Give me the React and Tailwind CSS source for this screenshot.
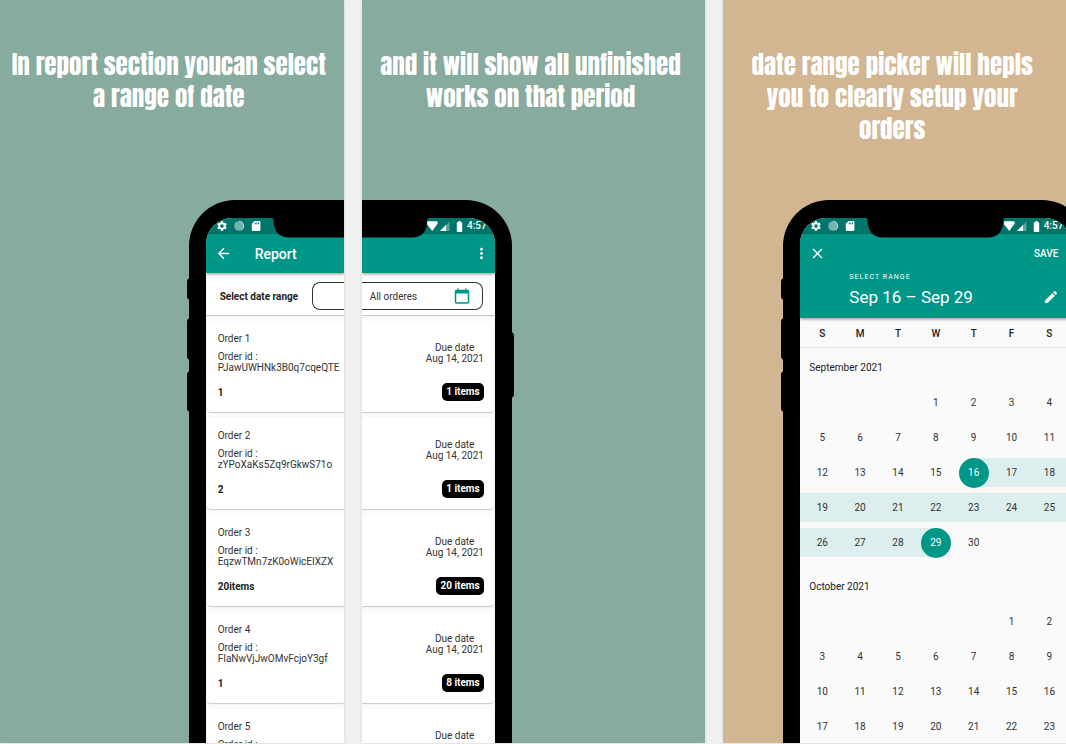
import React from "react";
import { MdSettings, MdBatteryFull, MdArrowBack, MdMoreVert, MdClose, MdEdit } from "react-icons/md";

const orders = [
  { name: "Order 1", id: "PJawUWHNk3B0q7cqeQTE", count: "1", items: "1 items" },
  { name: "Order 2", id: "zYPoXaKs5Zq9rGkwS71o", count: "2", items: "1 items" },
  { name: "Order 3", id: "EqzwTMn7zK0oWicEIXZX", count: "20items", items: "20 items" },
  { name: "Order 4", id: "FIaNwVjJwOMvFcjoY3gf", count: "1", items: "8 items" },
  { name: "Order 5", id: "", count: "", items: "" },
];

function Slide({ color, lines, children }) {
  return (
    <section className={`flex min-w-0 flex-col overflow-hidden shadow-[0_0_3px_rgba(0,0,0,0.12)] ${color}`}>
      <h2 className="h-[200px] shrink-0 pt-[49px] pr-1.5 text-center font-['Anton','Liberation_Sans_Narrow',sans-serif] text-[25px] leading-8 font-normal text-white">
        {lines.map((line) => (
          <span key={line} className="block whitespace-nowrap">
            {line}
          </span>
        ))}
      </h2>
      {children}
    </section>
  );
}

function LeftKeys() {
  return (
    <>
      <i className="absolute top-[78px] -left-0.5 h-[22px] w-1 rounded-l-sm bg-black" />
      <i className="absolute top-[118px] -left-0.5 h-[42px] w-1 rounded-l-sm bg-black" />
      <i className="absolute top-[171px] -left-0.5 h-[41px] w-1 rounded-l-sm bg-black" />
    </>
  );
}

function StatusLeft() {
  return (
    <div className="flex items-center gap-[5px] pl-2.5 text-white">
      <MdSettings size={12} />
      <svg width="12" height="12" viewBox="0 0 12 12">
        <circle cx="6" cy="6" r="4.8" fill="#fff" fillOpacity="0.45" />
        <path d="M6 1.2A4.8 4.8 0 0 1 8.5 10.1" fill="none" stroke="#fff" strokeOpacity="0.6" />
      </svg>
      <svg width="12" height="12" viewBox="0 0 12 12" fill="#fff">
        <path
          fillRule="evenodd"
          d="M4.6 1H9.4Q10.4 1 10.4 2V10Q10.4 11 9.4 11H2.8Q1.8 11 1.8 10V3.8ZM4.7 2.6V4.2H5.7V2.6ZM6.4 2.6V4.2H7.4V2.6ZM8.1 2.6V4.2H9.1V2.6Z"
        />
      </svg>
    </div>
  );
}

function StatusRight() {
  return (
    <div className="relative z-30 ml-auto flex items-center pr-2 text-white">
      <svg width="12" height="12" viewBox="0 0 12 12" fill="#fff">
        <path d="M6.300 11L1.200 4.500Q.9 3 1.200 1.300H11.200Q12 2.300 11.600 3.800Z" />
      </svg>
      <svg width="12" height="12" viewBox="0 0 12 12" fill="#fff" className="ml-px">
        <path d="M1 11L10.500 1.500V11Z" fillOpacity="0.35" />
        <path d="M1 11L7 5V11Z" />
      </svg>
      <MdBatteryFull size={13} className="ml-0.5" />
      <span className="ml-px text-[10px] leading-4 font-medium">4:57</span>
    </div>
  );
}

function OrdersLeft() {
  return (
    <div className="relative ml-auto flex w-[155px] flex-1 flex-col rounded-tl-[46px] bg-black pt-[18px] pl-[17px]">
      <LeftKeys />
      <div className="relative flex flex-1 flex-col overflow-hidden rounded-tl-[26px] bg-[#fafafa]">
        <div className="flex h-4 shrink-0 items-center bg-[#00756a]">
          <StatusLeft />
        </div>
        <svg className="absolute top-0 right-0 z-20" width="72" height="20" viewBox="0 0 72 20">
          <path d="M0 0C1.500 0 1.500 1 1.500 3C2 13 7 19.500 17 19.500H72V0Z" />
        </svg>
        <header className="z-10 flex h-[39px] shrink-0 items-center gap-[23px] bg-[#009688] pl-[9px] text-white shadow-[0_1px_3px_rgba(0,0,0,0.45)]">
          <button aria-label="Back">
            <MdArrowBack size={17} />
          </button>
          <h3 className="text-sm font-medium">Report</h3>
        </header>
        <div className="flex h-[42px] shrink-0 items-center bg-white pt-1 pl-3.5 shadow-[0_1px_1px_rgba(0,0,0,0.2)]">
          <span className="flex-1 text-[10px] font-bold whitespace-nowrap text-[#212121]">Select date range</span>
          <div className="h-7 w-8 rounded-l-lg border border-r-0 border-[#333]" />
        </div>
        <ul className="mt-1.5 flex flex-col gap-1.5 text-[10px] leading-[11px] text-[#333]">
          {orders.map((o) => (
            <li
              key={o.name}
              className="ml-px h-[91px] rounded-l-sm bg-white pt-3 pl-[11px] shadow-[0_1px_1px_rgba(0,0,0,0.2)]"
            >
              <p>{o.name}</p>
              <p className="mt-[7px]">Order id :</p>
              <p className="whitespace-nowrap">{o.id}</p>
              <p className="mt-3.5 font-bold text-[#212121]">{o.count}</p>
            </li>
          ))}
        </ul>
      </div>
    </div>
  );
}

function OrdersRight() {
  return (
    <div className="relative flex w-[150px] flex-1 flex-col rounded-tr-[46px] bg-black pt-[18px] pr-[17px]">
      <i className="absolute top-[132px] -right-0.5 h-[66px] w-1 rounded-r-sm bg-black" />
      <div className="relative flex flex-1 flex-col overflow-hidden rounded-tr-[26px] bg-[#fafafa]">
        <div className="flex h-4 shrink-0 items-center bg-[#00756a]">
          <StatusRight />
        </div>
        <svg className="absolute top-0 left-0 z-20" width="67" height="20" viewBox="0 0 67 20">
          <path d="M67 0C65.500 0 65.500 1 65.500 3C65 13 60 19.500 50 19.500H0V0Z" />
        </svg>
        <header className="z-10 flex h-[39px] shrink-0 items-center justify-end bg-[#009688] pr-[5px] text-white shadow-[0_1px_3px_rgba(0,0,0,0.45)]">
          <button aria-label="More options">
            <MdMoreVert size={17} />
          </button>
        </header>
        <div className="flex h-[42px] shrink-0 items-center bg-white pt-1 pr-3 shadow-[0_1px_1px_rgba(0,0,0,0.2)]">
          <button className="flex h-7 flex-1 items-center justify-between rounded-r-lg border border-l-0 border-[#333] pr-3 pl-2 text-[10px] text-[#333]">
            All orderes
            <svg width="16" height="16" viewBox="0 0 16 16" fill="none" stroke="#009688">
              <rect x="1.500" y="2.500" width="13" height="12.500" rx="1" strokeWidth="1.500" />
              <path d="M1 4H15" strokeWidth="3" />
              <path d="M4 .5V3M12 .5V3" strokeWidth="1.500" />
            </svg>
          </button>
        </div>
        <ul className="mt-1.5 flex flex-col gap-1.5 text-[10px] leading-[11px] text-[#333]">
          {orders.map((o) => (
            <li
              key={o.name}
              className="mr-px flex h-[91px] flex-col items-end rounded-r-sm bg-white pt-[21px] pr-2.5 shadow-[0_1px_1px_rgba(0,0,0,0.2)]"
            >
              <p className="w-[58px] text-center whitespace-nowrap">
                Due date
                <br />
                {o.items && "Aug 14, 2021"}
              </p>
              {o.items && (
                <span className="mt-[19px] rounded-[5px] bg-black px-1 py-1 leading-[10px] font-bold text-white">
                  {o.items}
                </span>
              )}
            </li>
          ))}
        </ul>
      </div>
    </div>
  );
}

const start = 16;
const end = 29;

function Day({ day, ranged }) {
  const isStart = ranged && day === start;
  const isEnd = ranged && day === end;
  const inside = ranged && day > start && day < end;
  return (
    <div className="flex h-[35px] items-center">
      <div
        className={`flex h-[29px] flex-1 items-center justify-center ${inside ? "bg-[#dceeed]" : ""} ${
          isStart ? "bg-linear-to-r from-transparent from-50% to-[#dceeed] to-50%" : ""
        } ${isEnd ? "bg-linear-to-l from-transparent from-50% to-[#dceeed] to-50%" : ""}`}
      >
        <button
          className={`size-[30px] shrink-0 rounded-full text-[10px] ${
            isStart || isEnd ? "bg-[#009688] text-white" : "text-[#333]"
          }`}
        >
          {day}
        </button>
      </div>
    </div>
  );
}

function Edge({ filled }) {
  return (
    <div className="flex h-[35px] items-center">
      <div className={`h-[29px] flex-1 ${filled ? "bg-[#dceeed]" : ""}`} />
    </div>
  );
}

function Month({ title, offset, last, ranged }) {
  const weeks = [];
  for (let first = 1 - offset; first <= last; first += 7) {
    weeks.push(Array.from({ length: 7 }, (_, i) => first + i));
  }
  return (
    <section>
      <h4 className="pl-[9px] text-[10px] leading-[35px] text-[#212121]">{title}</h4>
      {weeks.map((week) => (
        <div key={week[0]} className="grid grid-cols-[3px_repeat(7,1fr)_3px]">
          <Edge filled={ranged && week[0] > start && week[0] <= end} />
          {week.map((day) =>
            day > 0 && day <= last ? <Day key={day} day={day} ranged={ranged} /> : <span key={day} />
          )}
          <Edge filled={ranged && week[6] >= start && week[6] < end} />
        </div>
      ))}
    </section>
  );
}

function RangePicker() {
  return (
    <div className="relative ml-[60px] flex w-[305px] flex-1 flex-col rounded-t-[46px] bg-black px-[17px] pt-[18px]">
      <LeftKeys />
      <div className="relative flex flex-1 flex-col overflow-hidden rounded-t-[26px] bg-[#fafafa]">
        <div className="flex h-4 shrink-0 items-center bg-[#00756a]">
          <StatusLeft />
          <StatusRight />
        </div>
        <svg className="absolute top-0 left-[66px] z-20" width="139" height="20" viewBox="0 0 139 20">
          <path d="M0 0C1.500 0 1.500 1 1.500 3C2 13 7 19.500 17 19.500H122C132 19.500 137 13 137.500 3C137.500 1 137.500 0 139 0Z" />
        </svg>
        <header className="z-10 flex h-[84px] shrink-0 flex-col bg-[#009688] pr-3 pl-[9px] text-white shadow-[0_1px_3px_rgba(0,0,0,0.45)]">
          <div className="flex h-[39px] items-center justify-between">
            <button aria-label="Close">
              <MdClose size={17} />
            </button>
            <button className="pr-px text-[10px] font-medium">SAVE</button>
          </div>
          <p className="pl-10 text-[7px] leading-2 tracking-[0.15em]">SELECT RANGE</p>
          <div className="flex items-center justify-between pt-1 pl-10">
            <span className="text-[17px] leading-6">Sep 16 – Sep 29</span>
            <button aria-label="Edit range">
              <MdEdit size={16} />
            </button>
          </div>
        </header>
        <div className="grid h-[30px] shrink-0 grid-cols-7 items-center border-b border-[#e6e6e6] px-[3px] pt-0.5 text-center text-[10px] font-medium text-[#212121]">
          {["S", "M", "T", "W", "T", "F", "S"].map((d, i) => (
            <span key={i}>{d}</span>
          ))}
        </div>
        <div className="flex flex-col gap-[9px] pt-0.5">
          <Month title="September 2021" offset={3} last={30} ranged />
          <Month title="October 2021" offset={5} last={23} />
        </div>
      </div>
    </div>
  );
}

export default function App() {
  return (
    <main className="h-screen overflow-hidden bg-[#f0f0f0] pb-px font-[Roboto,sans-serif]">
      <div className="-mr-px grid h-full grid-cols-3 grid-rows-[100%] gap-[18px]">
        <Slide color="bg-[#88aba0]" lines={["In report section youcan select", "a range of date"]}>
          <OrdersLeft />
        </Slide>
        <Slide color="bg-[#88aba0]" lines={["and it will show all unfinished", "works on that period"]}>
          <OrdersRight />
        </Slide>
        <Slide color="bg-[#d2b591]" lines={["date range picker will hepls", "you to clearly setup your", "orders"]}>
          <RangePicker />
        </Slide>
      </div>
    </main>
  );
}
